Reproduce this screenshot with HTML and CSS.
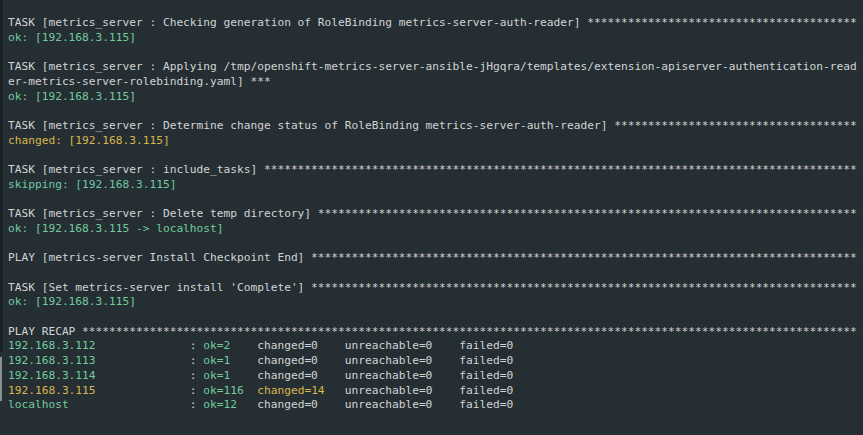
FILE: index.html
```html
<!DOCTYPE html>
<html lang="en">
<head>
    <meta charset="UTF-8">
    <title>ansible - metrics-server</title>
    <link rel="stylesheet" href="styles.css">
</head>
<body>

<div class="terminal">
    <div class="edge">
        <div class="edge-dark"></div>
        <div class="edge-thumb"></div>
    </div>
<pre class="output">TASK [metrics_server : Checking generation of RoleBinding metrics-server-auth-reader] ****************************************
<span class="ok">ok: [192.168.3.115]</span>

TASK [metrics_server : Applying /tmp/openshift-metrics-server-ansible-jHgqra/templates/extension-apiserver-authentication-read
er-metrics-server-rolebinding.yaml] ***
<span class="ok">ok: [192.168.3.115]</span>

TASK [metrics_server : Determine change status of RoleBinding metrics-server-auth-reader] ************************************
<span class="changed">changed: [192.168.3.115]</span>

TASK [metrics_server : include_tasks] ****************************************************************************************
<span class="skip">skipping: [192.168.3.115]</span>

TASK [metrics_server : Delete temp directory] ********************************************************************************
<span class="ok">ok: [192.168.3.115 -&gt; localhost]</span>

PLAY [metrics-server Install Checkpoint End] *********************************************************************************

TASK [Set metrics-server install 'Complete'] *********************************************************************************
<span class="ok">ok: [192.168.3.115]</span>

PLAY RECAP *******************************************************************************************************************
<span class="ok">192.168.3.112             </span> : <span class="ok">ok=2   </span> changed=0    unreachable=0    failed=0
<span class="ok">192.168.3.113             </span> : <span class="ok">ok=1   </span> changed=0    unreachable=0    failed=0
<span class="ok">192.168.3.114             </span> : <span class="ok">ok=1   </span> changed=0    unreachable=0    failed=0
<span class="changed">192.168.3.115             </span> : <span class="ok">ok=116 </span> <span class="changed">changed=14  </span> unreachable=0    failed=0
<span class="ok">localhost                 </span> : <span class="ok">ok=12  </span> changed=0    unreachable=0    failed=0
</pre>
</div>

</body>
</html>
```

FILE: styles.css
```css
html, body {
    margin: 0;
    height: 100%;
    background-color: #252e33;
    overflow: hidden;
}

.terminal {
    display: flex;
    height: 100%;
}

.edge {
    width: 3px;
    display: flex;
    flex-direction: column;
    flex-shrink: 0;
}

.edge-dark {
    height: 352px;
    background-color: #1a2125;
}

.edge-thumb {
    margin-top: 5px;
    width: 2px;
    height: 44px;
    background-color: #8c9194;
}

.output {
    margin: 0;
    padding: 16px 0 0 5px;
    font-family: "DejaVu Sans Mono", "Liberation Mono", monospace;
    font-size: 11.2px;
    line-height: 14.7px;
    color: #d2d4d5;
    white-space: pre;
}

.ok {
    color: #72cb9f;
}

.skip {
    color: #6fc8a8;
}

.changed {
    color: #d9b64c;
}
```
